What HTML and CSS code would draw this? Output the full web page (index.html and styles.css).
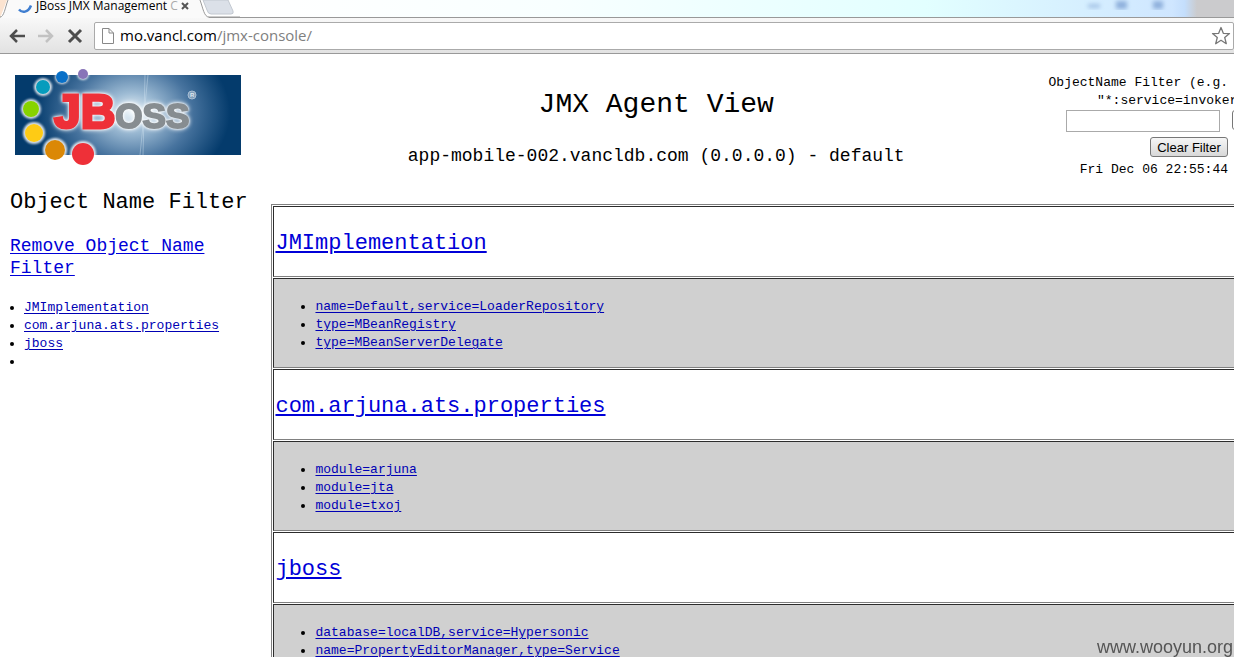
FILE: index.html
```html
<!doctype html>
<html lang="en">
  <head>
    <meta charset="utf-8">
    <meta name="viewport" content="width=device-width, initial-scale=1.0">
    <title>JBoss JMX Management Console</title>
    <link rel="stylesheet" href="styles.css">
  </head>
  <body>

    <div class="browser">
      <div class="tabs">
        <svg class="tab-left" width="12" height="18" viewBox="0 0 12 18">
          <path d="M0 0H7L0 18Z" fill="#fbe3d0"/>
          <path d="M12 0H8C5 8 4 17 0 17.500V18H12Z" fill="#fafafa"/>
          <path d="M8 0C5 8 4 17 0 17" fill="none" stroke="#999"/>
        </svg>
        <div class="tab">
          <svg class="spinner" width="16" height="18" viewBox="0 0 16 18">
            <path d="M1 9.500C4 13 10 13 13 5.500" fill="none" stroke="#3f7ed0" stroke-width="2.500"/>
          </svg>
          <span class="tab-title">JBoss JMX Management <span class="fade">C</span></span>
          <button class="tab-close" aria-label="Close tab">
            <svg width="8" height="8" viewBox="0 0 8 8"><path d="M1 1L7 7M7 1L1 7" stroke="#555" stroke-width="2"/></svg>
          </button>
        </div>
        <svg class="tab-right" width="44" height="18" viewBox="0 0 44 18">
          <path d="M0 0H4C7 8 8 17 13 17.500V18H0Z" fill="#fafafa"/>
          <path d="M4 0C7 8 8 17 13 17H44" fill="none" stroke="#999"/>
          <path d="M7 0H32L37 11Q38 14 35 14H15Q12 14 11 10Z" fill="#dbe0e8" stroke="#c2c8d0"/>
        </svg>
        <svg class="blurred" width="120" height="17" viewBox="0 0 120 17">
          <defs><filter id="haze"><feGaussianBlur stdDeviation="2"/></filter></defs>
          <g fill="#8fb0dc" filter="url(#haze)">
            <rect x="6" y="4" width="12" height="4" opacity=".7"/>
            <rect x="34" y="1" width="11" height="8"/>
            <rect x="71" y="1" width="10" height="8"/>
          </g>
        </svg>
      </div>
      <div class="toolbar">
        <button class="nav" aria-label="Back">
          <svg width="18" height="16" viewBox="0 0 18 16"><path d="M17 8H3M9 2L3 8L9 14" fill="none" stroke="#4d4d4d" stroke-width="2.500"/></svg>
        </button>
        <button class="nav" aria-label="Forward">
          <svg width="18" height="16" viewBox="0 0 18 16"><path d="M1 8H15M9 2L15 8L9 14" fill="none" stroke="#c2c2c2" stroke-width="2.500"/></svg>
        </button>
        <button class="nav" aria-label="Stop">
          <svg width="18" height="16" viewBox="0 0 18 16"><path d="M3 2L15 14M15 2L3 14" stroke="#4d4d4d" stroke-width="3"/></svg>
        </button>
        <div class="omnibox">
          <svg width="12" height="16" viewBox="0 0 12 16"><path d="M.5 .5H7L11.500 5V15.500H.5ZM7 .5V5H11.500" fill="#fff" stroke="#888"/></svg>
          <span class="url">mo.vancl.com<span class="path">/jmx-console/</span></span>
          <button class="star" aria-label="Bookmark">
            <svg width="20" height="20" viewBox="0 0 20 20"><path d="M10 1.500L12.300 7.300L18.500 7.600L13.700 11.500L15.300 17.700L10 14.300L4.700 17.700L6.300 11.500L1.500 7.600L7.700 7.300Z" fill="#fff" stroke="#777" stroke-width="1.300" stroke-linejoin="round"/></svg>
          </button>
        </div>
      </div>
    </div>

    <div class="page">
      <div class="sidebar">
        <svg class="logo" width="228" height="100" viewBox="14 66 228 100" role="img" aria-label="JBoss">
          <defs>
            <radialGradient id="sky" gradientUnits="userSpaceOnUse" cx="132" cy="113" r="98" gradientTransform="translate(0 22) scale(1 .8)">
              <stop offset="0" stop-color="#eef6fb"/>
              <stop offset=".25" stop-color="#9dbbd4"/>
              <stop offset=".6" stop-color="#48749f"/>
              <stop offset="1" stop-color="#043b6c"/>
            </radialGradient>
            <filter id="soft"><feGaussianBlur stdDeviation="1"/></filter>
          </defs>
          <rect x="15" y="75" width="226" height="80" fill="url(#sky)"/>
          <path d="M148 75L140 155M145 75L143 155" stroke="#d5e6f2" opacity=".4"/>
          <!-- glow under the dots -->
          <g fill="#fff" opacity=".85" filter="url(#soft)">
            <circle cx="83" cy="74" r="6"/>
            <circle cx="62" cy="77" r="7"/>
            <circle cx="43" cy="87" r="9"/>
            <circle cx="31" cy="109" r="10"/>
            <circle cx="34" cy="133" r="11"/>
            <circle cx="55" cy="150" r="12"/>
            <circle cx="83" cy="154" r="13"/>
          </g>
          <circle cx="83" cy="74" r="5" fill="#8874b8"/>
          <circle cx="62" cy="77" r="6" fill="#0870c8"/>
          <circle cx="43" cy="87" r="7" fill="#069cbd"/>
          <circle cx="31" cy="109" r="8" fill="#87d300"/>
          <circle cx="34" cy="133" r="9" fill="#fecb15"/>
          <circle cx="55" cy="150" r="10" fill="#db8806"/>
          <circle cx="83" cy="154" r="11" fill="#ee3038"/>
          <text x="54" y="128" class="name"><tspan class="red">JB</tspan><tspan class="gray">OSS</tspan></text>
          <circle cx="192" cy="95" r="4" fill="#7f9db9" stroke="#a9bfd4"/>
          <text x="190" y="97" class="reg">R</text>
        </svg>
        <h2>Object Name Filter</h2>
        <h3><a href="#">Remove Object Name Filter</a></h3>
        <ul>
          <li><a href="#">JMImplementation</a></li>
          <li><a href="#">com.arjuna.ats.properties</a></li>
          <li><a href="#">jboss</a></li>
          <li></li>
        </ul>
      </div>

      <div class="content">
        <div class="header">
          <div class="title">
            <h1>JMX Agent View</h1>
            <h3>app-mobile-002.vancldb.com (0.0.0.0) - default</h3>
          </div>
          <form class="filter">
            <label for="filter">ObjectName Filter (e.g.<span class="second">"*:service=invoker</span></label>
            <div class="apply">
              <input id="filter" type="text">
              <button type="button" aria-label="Apply Filter"></button>
            </div>
            <button type="button" class="clear">Clear Filter</button>
            <div>Fri Dec 06 22:55:44</div>
          </form>
        </div>

        <table>
          <tr><td><h2><a href="#">JMImplementation</a></h2></td></tr>
          <tr>
            <td class="beans">
              <ul>
                <li><a href="#">name=Default,service=LoaderRepository</a></li>
                <li><a href="#">type=MBeanRegistry</a></li>
                <li><a href="#">type=MBeanServerDelegate</a></li>
              </ul>
            </td>
          </tr>
          <tr><td><h2><a href="#">com.arjuna.ats.properties</a></h2></td></tr>
          <tr>
            <td class="beans">
              <ul>
                <li><a href="#">module=arjuna</a></li>
                <li><a href="#">module=jta</a></li>
                <li><a href="#">module=txoj</a></li>
              </ul>
            </td>
          </tr>
          <tr><td><h2><a href="#">jboss</a></h2></td></tr>
          <tr>
            <td class="beans">
              <ul>
                <li><a href="#">database=localDB,service=Hypersonic</a></li>
                <li><a href="#">name=PropertyEditorManager,type=Service</a></li>
              </ul>
            </td>
          </tr>
        </table>
      </div>
    </div>

    <div class="watermark">www.wooyun.org</div>
  </body>
</html>
```

FILE: styles.css
```css
*{
  box-sizing:border-box;
}
body{
  margin:0;
  height:100vh;
  display:flex;
  flex-direction:column;
  overflow:hidden;
  background:#fff;
  color:#000;
  font:13px/18px "Liberation Mono", monospace;
}
a{
  color:#0000b4;
  text-underline-offset:2px;
}
h1, h2, h3{
  margin:0;
  font-weight:normal;
}
h1{
  font-size:28px;
  line-height:36px;
}
h2{
  font-size:22px;
  line-height:27px;
}
h3{
  font-size:18px;
  line-height:22px;
}
h2 a, h3 a{
  color:#0000d8;
}
ul{
  margin:16px 0;
  padding:0 0 0 40px;
}
button{
  padding:0;
  border:0;
  background:none;
}

/* browser window */
.browser{
  flex:none;
  font-family:"Open Sans", "Noto Sans", sans-serif;
}
.tabs{
  display:flex;
  height:18px;
  background:linear-gradient(90deg, #fff 20%, #f8ffff 45%, #e2ffff 75%, #cfe6ff 95%, #c4defc 96%, #cbcbcd 97%);
  border-bottom:1px solid #999;
}
.tab-left, .tab-right{
  flex:none;
}
.tab{
  display:flex;
  align-items:flex-start;
  width:184px;
  height:18px;
  padding-left:6px;
  background:#fafafa;
}
.spinner{
  flex:none;
  margin-right:2px;
}
.tab-title{
  flex:1;
  font-size:12px;
  line-height:12px;
  white-space:nowrap;
}
.fade{
  color:#aaa;
}
.tab-close{
  width:20px;
  height:12px;
  padding-right:4px;
  line-height:12px;
}
.blurred{
  margin-left:auto;
  margin-right:32px;
}
.toolbar{
  display:flex;
  align-items:center;
  height:36px;
  padding:0 0 0 8px;
  background:linear-gradient(#f8f8f8, #e2e2e2);
  border-bottom:1px solid #999;
}
.nav{
  width:29px;
  height:20px;
  text-align:left;
}
.nav svg, .star svg{
  display:block;
}
.omnibox{
  flex:1;
  display:flex;
  align-items:center;
  height:28px;
  margin-left:-1px;
  padding:0 2px 0 7px;
  background:#fff;
  border:1px solid #aaa;
  border-radius:2px;
}
.url{
  flex:1;
  margin-left:6px;
  padding-bottom:2px;
  font-size:15px;
}
.path{
  color:#808080;
}

/* console */
.page{
  flex:1;
  display:grid;
  grid-template-columns:22% 1fr;
  min-height:0;
  overflow:hidden;
}
.sidebar{
  padding:12px 22px 0 10px;
}
.logo{
  display:block;
  margin:0 0 23px 4px;
}
.logo text{
  font-family:"Liberation Sans", sans-serif;
  font-weight:bold;
}
.logo .name{
  filter:drop-shadow(0 0 1px #fff) drop-shadow(0 0 2px #fff);
}
.red{
  fill:#ee3038;
  stroke:#ee3038;
  stroke-width:3px;
  font-size:48px;
}
.gray{
  fill:#878d91;
  stroke:#878d91;
  stroke-width:2px;
  font-size:35px;
}
.logo .reg{
  font-size:6px;
  fill:#dde7ef;
}
.sidebar h2{
  margin-bottom:19px;
  white-space:nowrap;
}
.sidebar ul{
  margin:20px 0;
  padding-left:14px;
}
.content{
  min-width:0;
}
.header{
  display:flex;
  height:150px;
}
.title{
  flex:1;
  padding-top:33px;
  text-align:center;
}
.title h3{
  margin-top:22px;
}
.filter{
  width:193px;
  display:flex;
  flex-direction:column;
  align-items:flex-end;
  padding:20px 6px 0 0;
  white-space:nowrap;
}
.filter label{
  align-self:stretch;
  text-align:right;
}
.second{
  display:block;
  padding-left:56px;
  text-align:left;
}
.apply{
  align-self:stretch;
  display:flex;
  gap:12px;
  padding-left:25px;
}
.apply input{
  flex:none;
  width:154px;
  height:22px;
  border:1px solid #aaa;
}
.apply button{
  flex:none;
  width:80px;
  height:20px;
  border:1px solid #777;
  border-radius:3px;
}
.clear{
  width:78px;
  height:20px;
  margin:5px 0 4px;
  background:linear-gradient(#f6f6f6, #d8d8d8);
  border:1px solid #777;
  border-radius:3px;
  font:13px "Liberation Sans", sans-serif;
}

/* runs past the right edge of the window */
table{
  width:calc(100% + 20px);
  border:1px solid #808080;
  border-spacing:1px;
}
td{
  padding:1px;
  border:1px solid;
  border-color:#2c2c2c #808080 #808080 #2c2c2c;
}
td h2{
  margin:22px 0 18px;
}
td ul{
  margin:18px 0 14px;
}
.beans{
  background:#d0d0d0;
}

.watermark{
  position:fixed;
  right:1px;
  bottom:0;
  color:#555;
  font:18px/20px "Liberation Sans", sans-serif;
}
```
